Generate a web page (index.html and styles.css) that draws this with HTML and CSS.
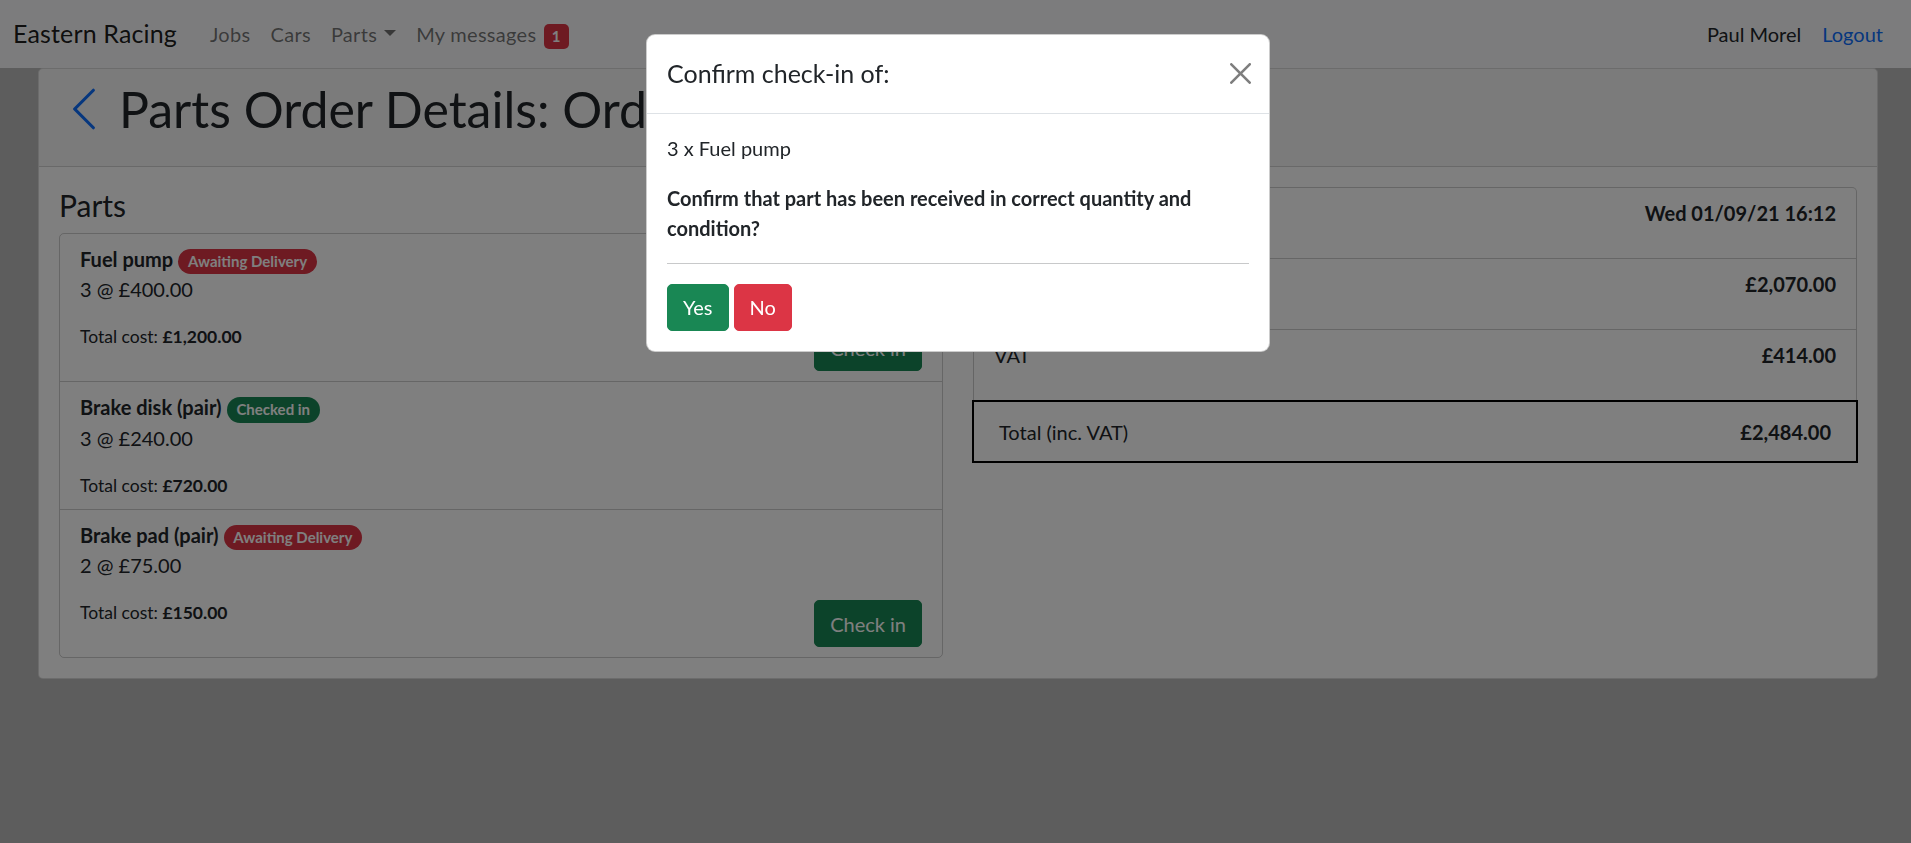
FILE: index.html
```html
<!DOCTYPE html>
<html lang="en">
<head>
<meta charset="utf-8">
<title>Parts Order Details</title>
<link rel="stylesheet" href="styles.css">
</head>
<body>
<nav class="navbar">
  <a class="brand" href="#">Eastern Racing</a>
  <ul class="nav-links">
    <li><a class="nav-link" href="#">Jobs</a></li>
    <li><a class="nav-link" href="#">Cars</a></li>
    <li><a class="nav-link" href="#">Parts<span class="caret"></span></a></li>
    <li><a class="nav-link" href="#">My messages <span class="count-badge">1</span></a></li>
  </ul>
  <div class="nav-right">
    <span class="user">Paul Morel</span>
    <a class="logout" href="#">Logout</a>
  </div>
</nav>

<main class="page">
  <section class="card">
    <header class="card-header">
      <a class="back" href="#" aria-label="Back">
        <svg viewBox="0 0 16 16" width="50" height="50"><path fill-rule="evenodd" d="M11.354 1.646a.5.5 0 0 1 0 .708L5.707 8l5.647 5.646a.5.5 0 0 1-.708.708l-6-6a.5.5 0 0 1 0-.708l6-6a.5.5 0 0 1 .708 0z"/></svg>
      </a>
      <h1 class="page-title">Parts Order Details: Order #1</h1>
    </header>
    <div class="card-body">
      <div class="col">
        <h4 class="section-title">Parts</h4>
        <div class="list">
          <div class="item">
            <div class="part-name"><strong>Fuel pump</strong> <span class="badge badge-danger">Awaiting Delivery</span></div>
            <p class="qty">3 @ £400.00</p>
            <div class="item-foot">
              <div class="cost">Total cost: <strong>£1,200.00</strong></div>
              <button class="btn btn-success">Check in</button>
            </div>
          </div>
          <div class="item">
            <div class="part-name"><strong>Brake disk (pair)</strong> <span class="badge badge-success">Checked in</span></div>
            <p class="qty">3 @ £240.00</p>
            <div class="item-foot">
              <div class="cost">Total cost: <strong>£720.00</strong></div>
            </div>
          </div>
          <div class="item">
            <div class="part-name"><strong>Brake pad (pair)</strong> <span class="badge badge-danger">Awaiting Delivery</span></div>
            <p class="qty">2 @ £75.00</p>
            <div class="item-foot">
              <div class="cost">Total cost: <strong>£150.00</strong></div>
              <button class="btn btn-success">Check in</button>
            </div>
          </div>
        </div>
      </div>
      <div class="col">
        <div class="summary">
          <div class="summary-row"><p>Date ordered</p><p><strong>Wed 01/09/21 16:12</strong></p></div>
          <div class="summary-row"><p>Total (ex. VAT)</p><p><strong>£2,070.00</strong></p></div>
          <div class="summary-row"><p>VAT</p><p><strong>£414.00</strong></p></div>
        </div>
        <div class="total-row"><span>Total (inc. VAT)</span><strong>£2,484.00</strong></div>
      </div>
    </div>
  </section>
</main>

<div class="backdrop"></div>
<div class="modal" role="dialog">
  <div class="modal-header">
    <h5 class="modal-title">Confirm check-in of:</h5>
    <button class="close" aria-label="Close">
      <svg viewBox="0 0 16 16" width="21" height="21"><path d="M.293.293a1 1 0 0 1 1.414 0L8 6.586 14.293.293a1 1 0 1 1 1.414 1.414L9.414 8l6.293 6.293a1 1 0 0 1-1.414 1.414L8 9.414l-6.293 6.293a1 1 0 0 1-1.414-1.414L6.586 8 .293 1.707a1 1 0 0 1 0-1.414z"/></svg>
    </button>
  </div>
  <div class="modal-body">
    <p class="modal-item">3 x Fuel pump</p>
    <p class="modal-question">Confirm that part has been received in correct quantity and condition?</p>
    <hr class="divider">
    <div class="modal-actions">
      <button class="btn btn-success">Yes</button>
      <button class="btn btn-danger">No</button>
    </div>
  </div>
</div>
</body>
</html>
```
FILE: styles.css
```css
* { box-sizing: border-box; }

html, body { margin: 0; }

body {
  font-family: Lato, "Noto Sans", sans-serif;
  font-size: 20px;
  line-height: 1.5;
  color: #212529;
  background: #bababa;
  min-height: 843px;
}

a { text-decoration: none; }

/* Navbar */
.navbar {
  display: flex;
  align-items: center;
  height: 68px;
  padding: 0 28px 0 13px;
  background: #f8f9fa;
}
.brand {
  font-size: 25px;
  line-height: 37.5px;
  color: rgba(0, 0, 0, .9);
  margin-right: 23px;
  letter-spacing: .15px;
}
.nav-links {
  display: flex;
  list-style: none;
  margin: 0;
  padding: 0;
}
.nav-link {
  display: block;
  padding: 10px;
  line-height: 30px;
  letter-spacing: .3px;
  color: rgba(0, 0, 0, .55);
}
.caret {
  display: inline-block;
  margin-left: 7px;
  vertical-align: 6px;
  border-top: 6px solid;
  border-left: 6px solid transparent;
  border-right: 6px solid transparent;
}
.count-badge {
  display: inline-block;
  margin-left: 2px;
  padding: 5.25px 8px;
  font-size: 15px;
  font-weight: 700;
  line-height: 1;
  letter-spacing: 0;
  color: #fff;
  background: #dc3545;
  border-radius: 5px;
}
.nav-right {
  margin-left: auto;
  display: flex;
  align-items: center;
  gap: 21px;
}
.user { color: #212529; }
.logout { color: #0d6efd; }

/* Card */
.page { padding: 0 33px 0 38px; }
.card {
  background: #fff;
  border: 1px solid rgba(0, 0, 0, .15);
  border-radius: 5px;
}
.card-header {
  display: flex;
  align-items: flex-start;
  padding: 10px 20px;
  background: rgba(0, 0, 0, .03);
  border-bottom: 1px solid rgba(0, 0, 0, .15);
}
.back {
  display: block;
  height: 77px;
  margin-right: 10px;
  color: #0d6efd;
}
.back svg { display: block; margin-top: 5px; fill: currentColor; }
.page-title {
  margin: 0 0 10px;
  font-size: 50px;
  line-height: 60px;
  font-weight: 400;
  white-space: nowrap;
}
.card-body {
  display: grid;
  grid-template-columns: 1fr 1fr;
  column-gap: 30px;
  padding: 20px;
}
.section-title {
  margin: 0 0 10px;
  font-size: 30px;
  line-height: 36px;
  font-weight: 400;
}

/* Parts list */
.list {
  border: 1px solid rgba(0, 0, 0, .2);
  border-radius: 5px;
}
.item { padding: 10px 20px; }
.item + .item { border-top: 1px solid rgba(0, 0, 0, .2); }
.part-name { line-height: 30px; }
.badge {
  display: inline-block;
  padding: 5.25px 9.75px;
  font-size: 15px;
  font-weight: 700;
  line-height: 1;
  color: #fff;
  border-radius: 50rem;
  white-space: nowrap;
}
.badge-danger { background: #dc3545; }
.badge-success { background: #198754; }
.qty { margin: 0 0 20px; }
.item-foot {
  display: flex;
  justify-content: space-between;
  align-items: flex-start;
}
.cost { font-size: 17.5px; line-height: 26.25px; }

.btn {
  display: inline-block;
  padding: 7.5px 15px;
  font-family: inherit;
  font-size: 20px;
  line-height: 30px;
  color: #fff;
  border: 1px solid transparent;
  border-radius: 5px;
  cursor: pointer;
}
.btn-success { background: #198754; border-color: #198754; }
.btn-danger { background: #dc3545; border-color: #dc3545; }

/* Summary */
.summary {
  border: 1px solid rgba(0, 0, 0, .2);
  border-bottom: 0;
  border-radius: 5px 5px 0 0;
}
.summary-row {
  display: flex;
  justify-content: space-between;
  padding: 10px 20px;
}
.summary-row + .summary-row { border-top: 1px solid rgba(0, 0, 0, .2); }
.summary-row p { margin: 0 0 20px; }
.total-row {
  display: flex;
  justify-content: space-between;
  margin: 0 -1px;
  padding: 14.5px 25px;
  line-height: 30px;
  border: 2px solid #000;
}

/* Modal */
.backdrop {
  position: fixed;
  inset: 0;
  background: rgba(0, 0, 0, .5);
}
.modal {
  position: fixed;
  top: 34px;
  left: 646px;
  width: 624px;
  background: #fff;
  border: 1px solid rgba(0, 0, 0, .2);
  border-radius: 9px;
}
.modal-header {
  display: flex;
  align-items: center;
  padding: 20px;
  border-bottom: 1px solid #dee2e6;
}
.modal-title {
  margin: 0;
  font-size: 25px;
  line-height: 37.5px;
  font-weight: 400;
}
.close {
  display: block;
  margin: 0 -2px 0 auto;
  padding: 0;
  border: 0;
  background: none;
  width: 21px;
  height: 21px;
}
.close svg { display: block; fill: #000; opacity: .5; }
.modal-body { padding: 19px 20px 20px; }
.modal-item { margin: 0 0 20px; }
.modal-question { margin: 0; font-weight: 700; }
.divider {
  margin: 20px 0;
  height: 1px;
  border: 0;
  background: #c8c9ca;
}
.modal-actions { display: flex; gap: 5px; }
```
